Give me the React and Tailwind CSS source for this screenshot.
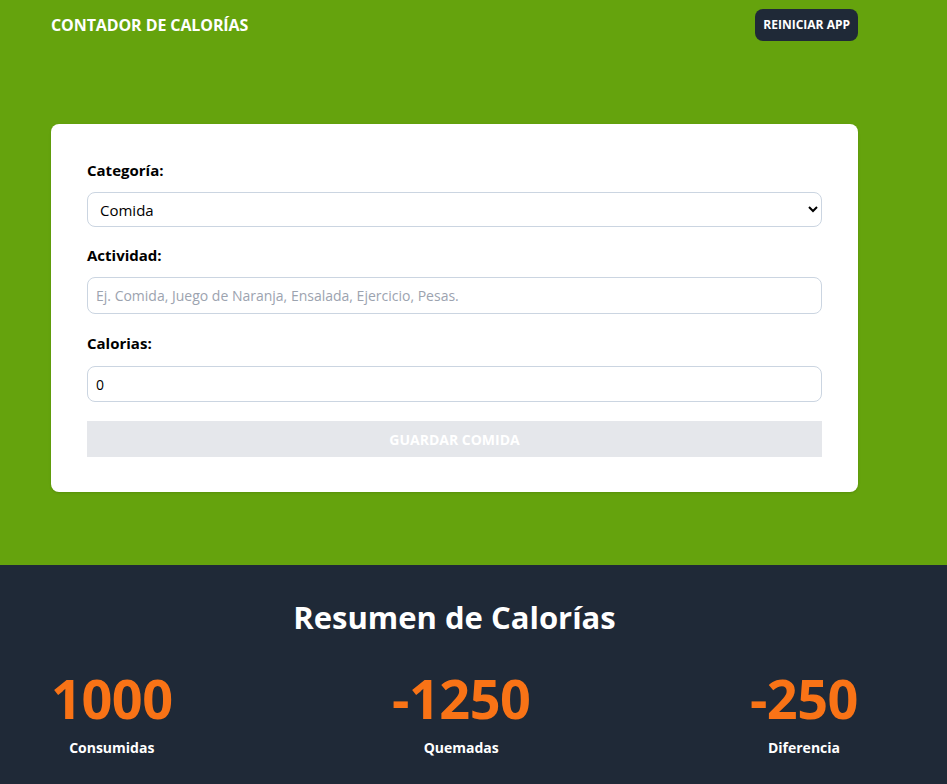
import React from "react";

export default function App() {
  const font = { fontFamily: '"Open Sans", "Noto Sans", sans-serif' };
  return (
    <div style={font} className="font-['Open_Sans',sans-serif] min-h-screen bg-[#1f2937]">
      <header className="bg-[#65a30d] pb-[73px]">
        <div className="ml-[51px] w-[807px] flex items-center justify-between pt-[9px]">
          <h1 className="text-[16px] font-bold text-white uppercase tracking-[-0.1px]">Contador de Calorías</h1>
          <button className="h-8 px-2 rounded-lg bg-[#1f2937] text-white text-[12px] font-bold uppercase">
            Reiniciar App
          </button>
        </div>
        <div className="ml-[51px] w-[807px] mt-[83px] bg-white rounded-lg shadow px-9 pt-[34px] pb-[35px]">
          <form className="flex flex-col">
            <label className="text-[15px] font-bold text-black leading-6">Categoría:</label>
            <select className="mt-[10px] h-[35px] w-full border border-[#cbd5e1] rounded-lg px-2 text-[15px] text-black bg-white">
              <option>Comida</option>
              <option>Ejercicio</option>
            </select>
            <label className="mt-4 text-[15px] font-bold text-black leading-6">Actividad:</label>
            <input
              type="text"
              placeholder="Ej. Comida, Juego de Naranja, Ensalada, Ejercicio, Pesas."
              className="mt-[10px] h-[37px] w-full border border-[#cbd5e1] rounded-lg px-2 text-[14px] placeholder:text-[#9ca3af]"
            />
            <label className="mt-[17px] text-[15px] font-bold text-black leading-6">Calorias:</label>
            <input
              type="number"
              defaultValue="0"
              className="mt-[11px] h-[36px] w-full border border-[#cbd5e1] rounded-lg px-2 text-[14px] text-black"
            />
            <button
              type="button"
              disabled
              className="mt-[19px] h-9 w-full bg-[#e5e7eb] text-white font-bold uppercase text-[14px]"
            >
              Guardar Comida
            </button>
          </form>
        </div>
      </header>
      <section className="bg-[#1f2937] pt-[34px] pb-[20px]">
        <h2 className="text-center text-[31px] font-bold text-white ml-[51px] w-[807px] leading-9">Resumen de Calorías</h2>
        <div className="ml-[51px] w-[807px] mt-[36px] flex justify-between">
          {[
            ["1000", "Consumidas"],
            ["-1250", "Quemadas"],
            ["-250", "Diferencia"],
          ].map(([n, l]) => (
            <div key={l} className="flex flex-col items-center">
              <span className="text-[54px] leading-[54px] font-bold text-[#f97316] tracking-[-0.5px]">{n}</span>
              <span className="mt-[12px] text-[14px] font-bold text-white">{l}</span>
            </div>
          ))}
        </div>
      </section>
    </div>
  );
}
